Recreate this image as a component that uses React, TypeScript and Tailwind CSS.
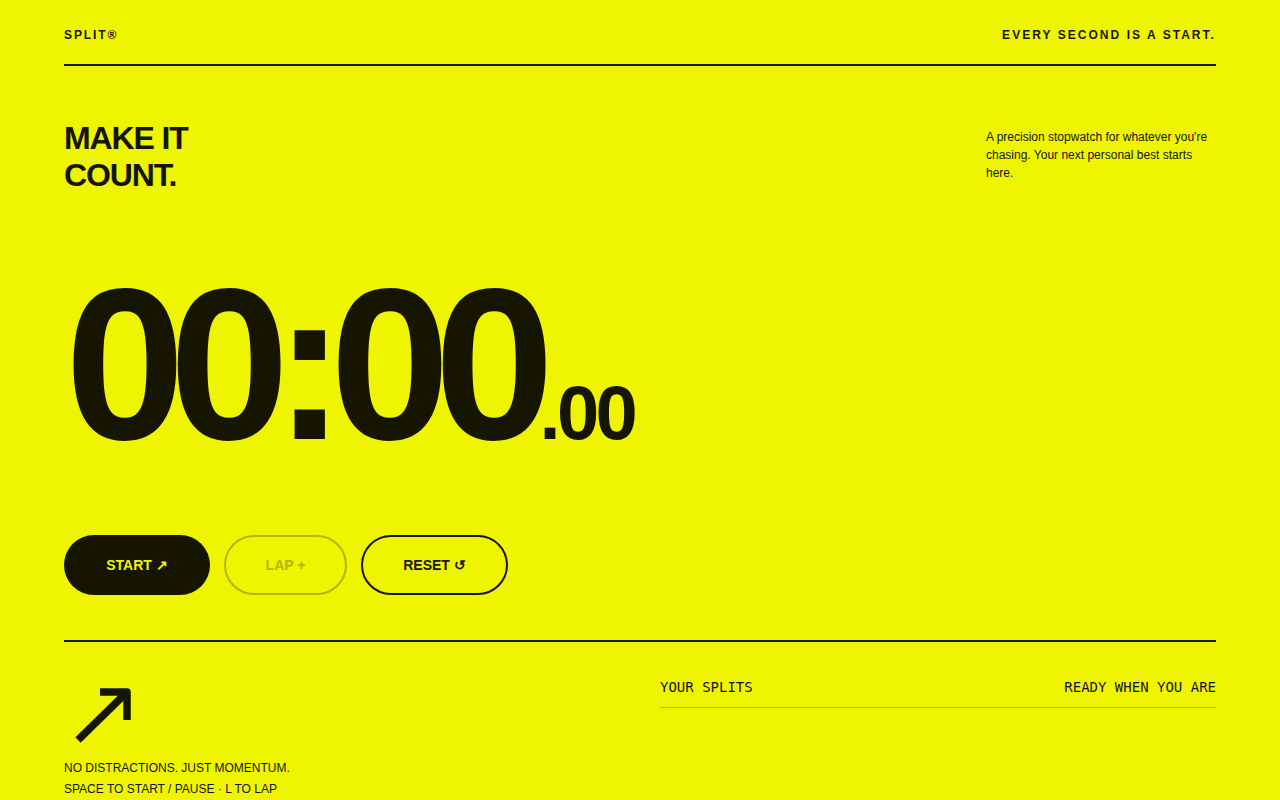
import { useEffect, useRef, useState } from 'react';

const INK = 'text-[#161600]';

function fmt(ms: number) {
  const m = Math.floor(ms / 60000);
  const s = Math.floor((ms % 60000) / 1000);
  const cs = Math.floor((ms % 1000) / 10);
  const p = (n: number) => String(n).padStart(2, '0');
  return { main: `${p(m)}:${p(s)}`, cs: p(cs) };
}

export default function App() {
  const [elapsed, setElapsed] = useState(0);
  const [running, setRunning] = useState(false);
  const [laps, setLaps] = useState<number[]>([]);
  const startRef = useRef(0);

  useEffect(() => {
    if (!running) return;
    startRef.current = performance.now() - elapsed;
    const id = setInterval(() => setElapsed(performance.now() - startRef.current), 30);
    return () => clearInterval(id);
    // eslint-disable-next-line react-hooks/exhaustive-deps
  }, [running]);

  const t = fmt(elapsed);

  return (
    <div className={`min-h-screen bg-[#eff500] ${INK} font-['Liberation_Sans',Arial,sans-serif]`}>
      <div className="px-16">
        {/* Header */}
        <header className="flex items-center justify-between pt-[28px] pb-[22px] border-b-2 border-[#161600]">
          <span className="text-[12px] leading-[14px] font-bold tracking-[0.16em]">SPLIT®</span>
          <span className="text-[12px] leading-[14px] font-bold tracking-[0.17em]">EVERY SECOND IS A START.</span>
        </header>

        {/* Hero */}
        <section className="flex items-start justify-between pt-[54px]">
          <h1 className="text-[32px] leading-[37px] font-bold tracking-[-0.035em]">
            MAKE IT
            <br />
            COUNT.
          </h1>
          <p className="w-[230px] mt-[8px] text-[12px] leading-[18px]">
            A precision stopwatch for whatever you're chasing. Your next personal best starts here.
          </p>
        </section>

        {/* Timer */}
        <div className="mt-[62px] flex items-baseline font-bold leading-none">
          <span className="text-[216px] tracking-[-0.073em] ml-[1px]">{t.main}</span>
          <span className="text-[76px] tracking-[-0.05em] ml-[1px]">.{t.cs}</span>
        </div>

        {/* Controls */}
        <div className="mt-[63px] flex gap-[14px]">
          <button
            onClick={() => setRunning(r => !r)}
            className="h-[60px] w-[146px] rounded-full bg-[#161600] text-[#eff500] text-[14px] font-bold"
          >
            {running ? 'PAUSE ❚❚' : 'START ↗'}
          </button>
          <button
            onClick={() => running && setLaps(l => [...l, elapsed])}
            className="h-[60px] w-[123px] rounded-full border-2 border-[#b3b600] text-[#b3b600] text-[14px] font-bold"
          >
            LAP +
          </button>
          <button
            onClick={() => { setRunning(false); setElapsed(0); setLaps([]); }}
            className="h-[60px] w-[147px] rounded-full border-2 border-[#161600] text-[14px] font-bold"
          >
            RESET ↺
          </button>
        </div>

        {/* Bottom */}
        <section className="mt-[45px] border-t-2 border-[#161600] grid grid-cols-2 gap-10">
          <div className="pt-[42px]">
            <svg width="70" height="64" viewBox="0 0 70 64" fill="none">
              <path d="M14 56 L61 10" stroke="#161600" strokeWidth="7.5" />
              <path d="M36 8 H63 V36" stroke="#161600" strokeWidth="7.5" strokeLinejoin="round" />
            </svg>
            <div className="mt-[10px] text-[12px] leading-[21px]">
              <p>NO DISTRACTIONS. JUST MOMENTUM.</p>
              <p>SPACE TO START / PAUSE · L TO LAP</p>
            </div>
          </div>
          <div className="pt-[36px]">
            <div className="flex justify-between pb-[11px] border-b border-[#161600]/25 font-['DejaVu_Sans_Mono',monospace] text-[14px] leading-[18px]">
              <span>YOUR SPLITS</span>
              <span>{laps.length ? `${laps.length} LAPS` : 'READY WHEN YOU ARE'}</span>
            </div>
            {laps.map((l, i) => {
              const f = fmt(l);
              return (
                <div key={i} className="flex justify-between py-2 border-b border-[#161600]/25 font-['DejaVu_Sans_Mono',monospace] text-[14px]">
                  <span>LAP {String(i + 1).padStart(2, '0')}</span>
                  <span>{f.main}.{f.cs}</span>
                </div>
              );
            })}
          </div>
        </section>
      </div>
    </div>
  );
}
